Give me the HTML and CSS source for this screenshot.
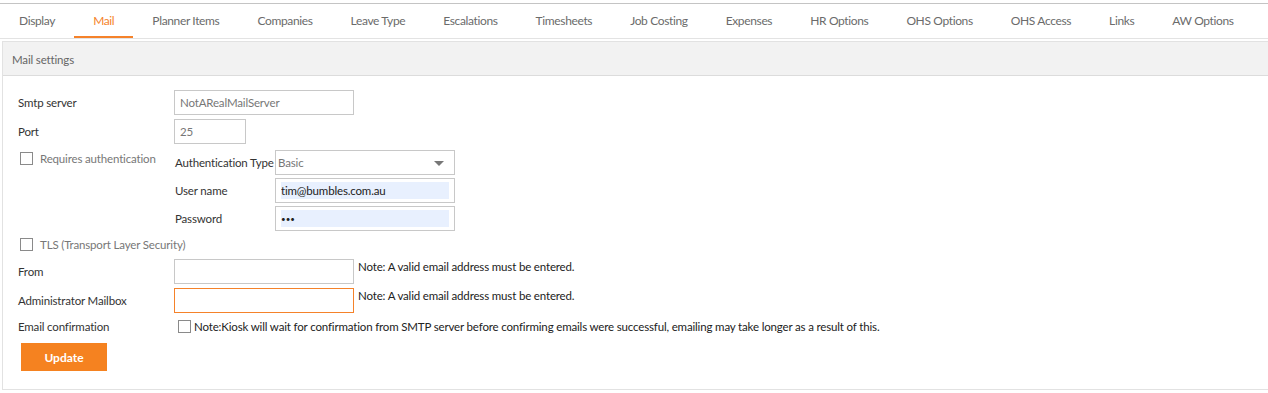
FILE: index.html
```html
<!DOCTYPE html>
<html lang="en">
<head>
  <meta charset="UTF-8" />
  <title>Mail settings</title>
  <link rel="stylesheet" href="styles.css">
</head>
<body>
  <div class="top-line"></div>

  <ul class="tabs">
    <li>Display</li>
    <li class="active">Mail</li>
    <li>Planner Items</li>
    <li>Companies</li>
    <li>Leave Type</li>
    <li>Escalations</li>
    <li>Timesheets</li>
    <li>Job Costing</li>
    <li>Expenses</li>
    <li>HR Options</li>
    <li>OHS Options</li>
    <li>OHS Access</li>
    <li>Links</li>
    <li>AW Options</li>
  </ul>

  <div class="panel">
    <div class="panel-head">Mail settings</div>

    <form class="panel-body">
      <div class="row">
        <label class="lbl">Smtp server</label>
        <input type="text" class="field" value="NotARealMailServer" />
      </div>

      <div class="row">
        <label class="lbl">Port</label>
        <input type="text" class="field port" value="25" />
      </div>

      <div class="auth-row">
        <label class="check-lbl muted">
          <input type="checkbox" class="box" />
          Requires authentication
        </label>

        <div class="auth-grid">
          <label class="sub-lbl">Authentication Type</label>
          <span class="select-wrap">
            <select class="field select">
              <option>Basic</option>
            </select>
          </span>

          <label class="sub-lbl">User name</label>
          <input type="text" class="field filled" value="tim@bumbles.com.au" />

          <label class="sub-lbl">Password</label>
          <input type="password" class="field filled pass" value="abc" />
        </div>
      </div>

      <div class="tls-row">
        <label class="check-lbl muted">
          <input type="checkbox" class="box" />
          TLS (Transport Layer Security)
        </label>
      </div>

      <div class="row note-row">
        <label class="lbl">From</label>
        <input type="text" class="field" />
        <span class="note">Note: A valid email address must be entered.</span>
      </div>

      <div class="row note-row">
        <label class="lbl">Administrator Mailbox</label>
        <input type="text" class="field focus" />
        <span class="note">Note: A valid email address must be entered.</span>
      </div>

      <div class="row confirm-row">
        <label class="lbl">Email confirmation</label>
        <input type="checkbox" class="box" />
        <span class="note-inline">Note:Kiosk will wait for confirmation from SMTP server before confirming emails were successful, emailing may take longer as a result of this.</span>
      </div>

      <button type="button" class="btn">Update</button>
    </form>
  </div>
</body>
</html>
```

FILE: styles.css
```css
body {
  margin: 0;
  font-family: "Lato", "Liberation Sans", sans-serif;
  font-size: 11.5px;
  letter-spacing: -0.16px;
  color: #333;
  background: #fff;
}

.top-line {
  margin-top: 3px;
  height: 1px;
  background: #c4c4c4;
}

.tabs {
  list-style: none;
  margin: 0;
  padding: 0;
  display: flex;
  height: 34px;
  border-bottom: 1px solid #e3e3e3;
}

.tabs li {
  flex-shrink: 0;
  white-space: nowrap;
  padding: 0 19px;
  line-height: 33px;
  font-size: 12px;
  letter-spacing: -0.36px;
  color: #6b6b6b;
  border-bottom: 2px solid transparent;
}

.tabs li.active {
  color: #f5822a;
  border-bottom-color: #f5822a;
}

.panel {
  margin: 2px 0 0 2px;
  border: 1px solid #e2e2e2;
  border-right: none;
}

.panel-head {
  height: 33px;
  line-height: 35px;
  padding-left: 9px;
  background: #f2f2f2;
  border-bottom: 1px solid #dcdcdc;
  color: #666;
}

.panel-body {
  padding: 14px 0 18px 15px;
}

.row {
  display: flex;
  align-items: center;
  margin-bottom: 4px;
}

.lbl {
  width: 156px;
  flex-shrink: 0;
  white-space: nowrap;
}

.field {
  box-sizing: border-box;
  width: 180px;
  height: 25px;
  margin: 0;
  padding: 0 5px;
  border: 1px solid #c8c8c8;
  border-radius: 0;
  font-family: inherit;
  font-size: 11.5px;
  letter-spacing: -0.16px;
  color: #777;
  background: #fff;
  outline: none;
}

.field.port {
  width: 72px;
}

.field.focus {
  border-color: #f5822a;
}

.field.filled {
  padding: 3px 5px;
  background: #e8f0fe;
  background-clip: content-box;
  color: #222;
}

.field.pass {
  font-size: 8px;
  letter-spacing: 0;
}

.auth-row {
  display: flex;
  align-items: flex-start;
  margin-top: 6px;
}

.check-lbl {
  box-sizing: border-box;
  display: flex;
  align-items: center;
  gap: 7px;
  width: 157px;
  flex-shrink: 0;
  white-space: nowrap;
  padding: 2px 0 0 2px;
}

.tls-row .check-lbl {
  width: auto;
}

.muted {
  color: #777;
}

.box {
  appearance: none;
  box-sizing: border-box;
  flex-shrink: 0;
  width: 13px;
  height: 13px;
  margin: 0;
  border: 1px solid #8a8a8a;
  background: #fff;
}

.auth-grid {
  display: grid;
  grid-template-columns: 100px 180px;
  row-gap: 3px;
  align-items: center;
}

.sub-lbl {
  white-space: nowrap;
}

.select-wrap {
  position: relative;
  display: block;
  width: 180px;
}

.select {
  appearance: none;
  padding: 0 2px;
}

.select-wrap::after {
  content: "";
  position: absolute;
  right: 11px;
  top: 11px;
  border-left: 5px solid transparent;
  border-right: 5px solid transparent;
  border-top: 5px solid #777;
}

.tls-row {
  margin: 5px 0 8px;
}

.note-row {
  align-items: flex-start;
}

.note-row .lbl {
  align-self: center;
}

.note {
  margin-left: 4px;
  margin-top: 1px;
  color: #222;
}

.confirm-row {
  margin-top: 7px;
}

.confirm-row .box {
  margin-left: 4px;
}

.note-inline {
  margin-left: 3px;
  color: #222;
}

.btn {
  display: block;
  margin: 10px 0 0 3px;
  width: 86px;
  height: 28px;
  border: none;
  background: #f58220;
  color: #fff;
  font-family: inherit;
  font-size: 12px;
  font-weight: bold;
  cursor: pointer;
}
```
